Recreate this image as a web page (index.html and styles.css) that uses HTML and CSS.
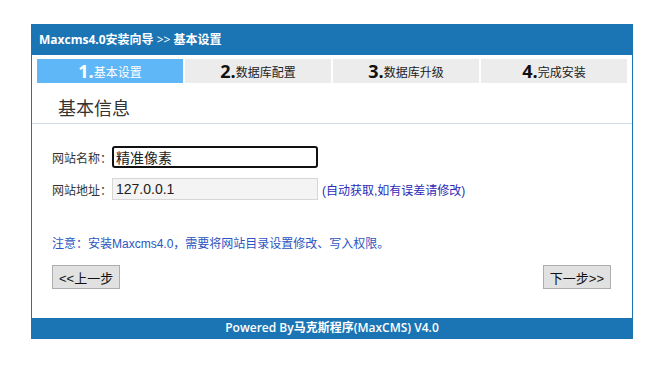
FILE: index.html
```html
<!DOCTYPE html>
<html lang="zh-CN">
<head>
    <meta charset="UTF-8">
    <title>Maxcms4.0安装向导</title>
    <link rel="stylesheet" href="styles.css">
</head>
<body>
    <div class="wrap">
        <div class="header">Maxcms4.0安装向导 <span class="sep">&gt;&gt;</span> 基本设置</div>

        <div class="steps">
            <div class="step active"><b>1.</b>基本设置</div>
            <div class="step"><b>2.</b>数据库配置</div>
            <div class="step"><b>3.</b>数据库升级</div>
            <div class="step"><b>4.</b>完成安装</div>
        </div>

        <h2 class="title">基本信息</h2>

        <form class="main">
            <div class="row">
                <label for="sitename">网站名称：</label>
                <input type="text" id="sitename" class="focused" value="精准像素">
            </div>
            <div class="row">
                <label for="siteurl">网站地址：</label>
                <input type="text" id="siteurl" class="readonly" value="127.0.0.1">
                <span class="tip">(自动获取,如有误差请修改)</span>
            </div>

            <p class="note">注意：安装Maxcms4.0，需要将网站目录设置修改、写入权限。</p>

            <div class="buttons">
                <button type="button">&lt;&lt;上一步</button>
                <button type="button">下一步&gt;&gt;</button>
            </div>
        </form>

        <div class="footer">Powered By马克斯程序(MaxCMS) V4.0</div>
    </div>
</body>
</html>
```

FILE: styles.css
```css
body {
    margin: 0;
    padding-top: 24px;
    background: #fff;
    font-family: "Liberation Sans", "Noto Sans CJK SC", sans-serif;
    font-size: 12px;
    color: #333;
}
.wrap {
    width: 600px;
    margin: 0 auto;
    border: 1px solid #1b75b4;
    border-top: none;
}
.header {
    height: 31px;
    line-height: 31px;
    padding-left: 7px;
    background-color: #1b75b4;
    color: #fff;
    font-family: "Open Sans", "Noto Sans CJK SC", sans-serif;
    font-weight: bold;
    font-size: 12px;
}
.header .sep {
    font-weight: normal;
}
.steps {
    display: flex;
    gap: 2px;
    padding: 4px 5px 0;
}
.step {
    flex: 1;
    height: 24px;
    line-height: 24px;
    text-align: center;
    background-color: #ececec;
    color: #222;
    font-size: 12px;
}
.step b {
    font-family: "Open Sans", sans-serif;
    font-size: 18px;
    color: #111;
    vertical-align: -1px;
}
.step.active {
    background-color: #5fb7f8;
    color: #fff;
}
.step.active b {
    color: #fff;
}
.title {
    margin: 0;
    height: 28px;
    line-height: 28px;
    padding: 12px 0 0 26px;
    font-size: 18px;
    font-weight: normal;
    color: #333;
    border-bottom: 1px solid #cfdfe9;
}
.main {
    padding: 22px 20px 0;
}
.row {
    display: flex;
    align-items: center;
    height: 22px;
    margin-bottom: 10px;
}
.row label {
    width: 60px;
    color: #333;
}
.row input {
    box-sizing: border-box;
    width: 206px;
    height: 22px;
    padding: 0 3px;
    font-family: "Liberation Sans", "Noto Sans CJK SC", sans-serif;
    font-size: 14px;
    color: #222;
    border: 1px solid #ccc;
    border-radius: 0;
    outline: none;
}
.row input.focused {
    border: 2px solid #111;
    border-radius: 3px;
    padding: 0 2px;
}
.row input.readonly {
    background-color: #f4f4f4;
    border-color: #d6d6d6;
}
.tip {
    margin-left: 4px;
    color: #2b2bb8;
}
.note {
    margin: 34px 0 0;
    color: #2b55c0;
}
.buttons {
    display: flex;
    justify-content: space-between;
    padding: 14px 0 0;
    margin-right: 1px;
    height: 38px;
}
.buttons button {
    height: 24px;
    padding: 0 6px;
    font-family: "Liberation Sans", "Noto Sans CJK SC", sans-serif;
    font-size: 13px;
    color: #111;
    background-color: #e1e1e1;
    border: 1px solid #adadad;
    border-radius: 0;
}
.footer {
    height: 20px;
    line-height: 20px;
    margin-top: 15px;
    text-align: center;
    background-color: #1b75b4;
    color: #fff;
    font-family: "Open Sans", "Noto Sans CJK SC", sans-serif;
    font-weight: 600;
    font-size: 12px;
}
```
